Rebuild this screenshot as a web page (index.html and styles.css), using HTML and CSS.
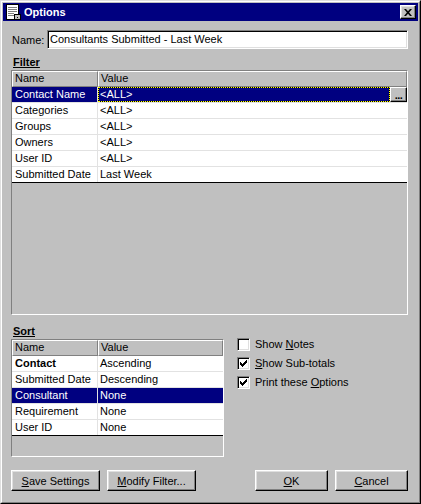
FILE: index.html
```
<!DOCTYPE html>
<html>
<head>
<meta charset="utf-8">
<link rel="stylesheet" href="styles.css">
</head>
<body>
<div class="window">
  <div class="frame">
    <div class="titlebar">
      <svg class="title-icon" width="16" height="16" viewBox="0 0 16 16">
        <rect x="1.5" y="0.5" width="12" height="15" fill="#fff" stroke="#000"/>
        <g stroke="#808080" stroke-width="1">
          <line x1="3" y1="3.5" x2="12" y2="3.5"/>
          <line x1="3" y1="5.5" x2="12" y2="5.5"/>
          <line x1="3" y1="7.5" x2="12" y2="7.5"/>
          <line x1="3" y1="9.5" x2="9" y2="9.5"/>
          <line x1="3" y1="11.5" x2="9" y2="11.5"/>
        </g>
        <rect x="9.5" y="10.5" width="6" height="5" fill="#c0c0c0" stroke="#000"/>
        <rect x="12" y="13" width="1" height="1" fill="#000"/>
      </svg>
      <span class="title">Options</span>
      <div class="close">
        <svg width="8" height="7" viewBox="0 0 8 7">
          <path d="M0 0H2L4 2.3L6 0H8L5.1 3.5L8 7H6L4 4.7L2 7H0L2.9 3.5Z" fill="#000"/>
        </svg>
      </div>
    </div>

    <div class="content">
      <div class="name-row">
        <span class="name-label">Name:</span>
        <div class="input">Consultants Submitted - Last Week</div>
      </div>

      <div class="section-label filter-label">Filter</div>
      <div class="grid filter-grid">
        <div class="ghead">
          <div class="hcell c1">Name</div>
          <div class="hcell c2">Value</div>
        </div>
        <div class="grow selected">
          <div class="cell c1">Contact Name</div>
          <div class="cell c2 focus">&lt;ALL&gt;</div>
          <div class="ellipsis">...</div>
        </div>
        <div class="grow">
          <div class="cell c1">Categories</div>
          <div class="cell c2">&lt;ALL&gt;</div>
        </div>
        <div class="grow">
          <div class="cell c1">Groups</div>
          <div class="cell c2">&lt;ALL&gt;</div>
        </div>
        <div class="grow">
          <div class="cell c1">Owners</div>
          <div class="cell c2">&lt;ALL&gt;</div>
        </div>
        <div class="grow">
          <div class="cell c1">User ID</div>
          <div class="cell c2">&lt;ALL&gt;</div>
        </div>
        <div class="grow last">
          <div class="cell c1">Submitted Date</div>
          <div class="cell c2">Last Week</div>
        </div>
      </div>

      <div class="sort-row">
        <div class="sort-col">
          <div class="section-label sort-label">Sort</div>
          <div class="grid sort-grid">
            <div class="ghead">
              <div class="hcell c1">Name</div>
              <div class="hcell c2">Value</div>
            </div>
            <div class="grow">
              <div class="cell c1 bold">Contact</div>
              <div class="cell c2">Ascending</div>
            </div>
            <div class="grow">
              <div class="cell c1">Submitted Date</div>
              <div class="cell c2">Descending</div>
            </div>
            <div class="grow selected">
              <div class="cell c1">Consultant</div>
              <div class="cell c2">None</div>
            </div>
            <div class="grow">
              <div class="cell c1">Requirement</div>
              <div class="cell c2">None</div>
            </div>
            <div class="grow last">
              <div class="cell c1">User ID</div>
              <div class="cell c2">None</div>
            </div>
          </div>
        </div>
        <div class="checks">
          <div class="check-item">
            <span class="box"></span>
            <span>Show <u>N</u>otes</span>
          </div>
          <div class="check-item">
            <span class="box">
              <svg width="7" height="7" viewBox="0 0 7 7"><path d="M0 2H1V3H2V4H3V3H4V2H5V1H6V0H7V3H6V4H5V5H4V6H3V7H2V6H1V5H0Z" fill="#000"/></svg>
            </span>
            <span><u>S</u>how Sub-totals</span>
          </div>
          <div class="check-item">
            <span class="box">
              <svg width="7" height="7" viewBox="0 0 7 7"><path d="M0 2H1V3H2V4H3V3H4V2H5V1H6V0H7V3H6V4H5V5H4V6H3V7H2V6H1V5H0Z" fill="#000"/></svg>
            </span>
            <span>Print these <u>O</u>ptions</span>
          </div>
        </div>
      </div>

      <div class="buttons">
        <div class="btn wide"><span><u>S</u>ave Settings</span></div>
        <div class="btn wide"><span><u>M</u>odify Filter...</span></div>
        <div class="btn narrow push"><span><u>O</u>K</span></div>
        <div class="btn narrow"><span><u>C</u>ancel</span></div>
      </div>
    </div>
  </div>
</div>
</body>
</html>
```
FILE: styles.css
```
* { box-sizing: border-box; }
body {
  margin: 0;
  background: #c0c0c0;
  font-family: "Liberation Sans", Arial, sans-serif;
  font-size: 11px;
  color: #000;
}
.window {
  width: 421px;
  height: 504px;
  border: 1px solid;
  border-color: #dfdfdf #000 #000 #dfdfdf;
  background: #c0c0c0;
}
.frame {
  height: 100%;
  border: 1px solid;
  border-color: #fff #808080 #808080 #fff;
  padding: 1px;
  display: flex;
  flex-direction: column;
}
.titlebar {
  height: 18px;
  background: #000080;
  display: flex;
  align-items: center;
  padding: 0 2px;
  color: #fff;
  font-weight: bold;
}
.title-icon { margin-right: 3px; display: block; }
.title { flex: 1; }
.close {
  width: 16px;
  height: 14px;
  background: #c0c0c0;
  border: 1px solid;
  border-color: #fff #000 #000 #fff;
  box-shadow: inset -1px -1px #808080, inset 1px 1px #dfdfdf;
  display: flex;
  align-items: center;
  justify-content: center;
}
.close svg { display: block; }
.content {
  padding: 9px 10px 0 8px;
  display: flex;
  flex-direction: column;
  flex: 1;
}
.name-row {
  display: flex;
  align-items: center;
  height: 19px;
}
.name-label {
  width: 36px;
  padding-left: 1px;
}
.input {
  flex: 1;
  height: 19px;
  border: 1px solid;
  border-color: #808080 #fff #fff #808080;
  box-shadow: inset 1px 1px #000, inset -1px -1px #dfdfdf;
  background: #fff;
  padding: 0 2px;
  line-height: 17px;
}
.section-label {
  font-weight: bold;
  text-decoration: underline;
  height: 14px;
  line-height: 12px;
  padding-left: 2px;
}
.filter-label { margin-top: 7px; }
.sort-label { margin-top: 10px; }

.grid {
  border: 1px solid;
  border-color: #808080 #fff #fff #808080;
  background: #c0c0c0;
  display: flex;
  flex-direction: column;
}
.filter-grid { height: 245px; }
.sort-grid { height: 118px; }

.ghead {
  display: flex;
  height: 16px;
}
.hcell {
  height: 16px;
  border: 1px solid;
  border-color: #fff #808080 #808080 #fff;
  padding-left: 2px;
  line-height: 13px;
  background: #c0c0c0;
}
.c1 { width: 86px; flex: none; }
.c2 { flex: 1; }

.grow {
  display: flex;
  height: 16px;
  background: #fff;
  border-bottom: 1px solid #e2e2e2;
}
.grow.last { border-bottom-color: #000; }
.cell {
  line-height: 15px;
  white-space: nowrap;
}
.cell.c1 {
  padding-left: 3px;
  border-right: 1px solid #e2e2e2;
}
.cell.c2 { padding-left: 2px; }
.bold { font-weight: bold; }

.grow.selected { background: #000080; color: #fff; }
.cell.focus {
  border: 1px dotted #ffff00;
  background: linear-gradient(#000080, #000080) padding-box, linear-gradient(#000, #000) border-box;
  padding-left: 1px;
  line-height: 13px;
}
.ellipsis {
  width: 17px;
  height: 15px;
  flex: none;
  background: #c0c0c0;
  color: #000;
  border: 1px solid;
  border-color: #fff #000 #000 #fff;
  box-shadow: inset -1px -1px #808080;
  text-align: center;
  line-height: 14px;
  font-weight: bold;
  letter-spacing: -0.5px;
}

.sort-row {
  display: flex;
}
.sort-col {
  width: 213px;
  display: flex;
  flex-direction: column;
}
.checks {
  margin-left: 13px;
  padding-top: 23px;
  display: flex;
  flex-direction: column;
}
.check-item {
  display: flex;
  align-items: flex-start;
  height: 19px;
  line-height: 13px;
}
.box {
  width: 13px;
  height: 13px;
  margin-right: 5px;
  background: #fff;
  border: 1px solid;
  border-color: #808080 #fff #fff #808080;
  box-shadow: inset 1px 1px #000, inset -1px -1px #dfdfdf;
  display: flex;
  align-items: center;
  justify-content: center;
}
.box svg { display: block; }

.buttons {
  display: flex;
  margin-top: 13px;
  gap: 7px;
}
.btn {
  height: 21px;
  background: #c0c0c0;
  border: 1px solid;
  border-color: #fff #000 #000 #fff;
  box-shadow: inset -1px -1px #808080, inset 1px 1px #dfdfdf;
  display: flex;
  align-items: center;
  justify-content: center;
}
.btn.wide { width: 89px; }
.btn.narrow { width: 73px; }
.btn.push { margin-left: auto; }
```
